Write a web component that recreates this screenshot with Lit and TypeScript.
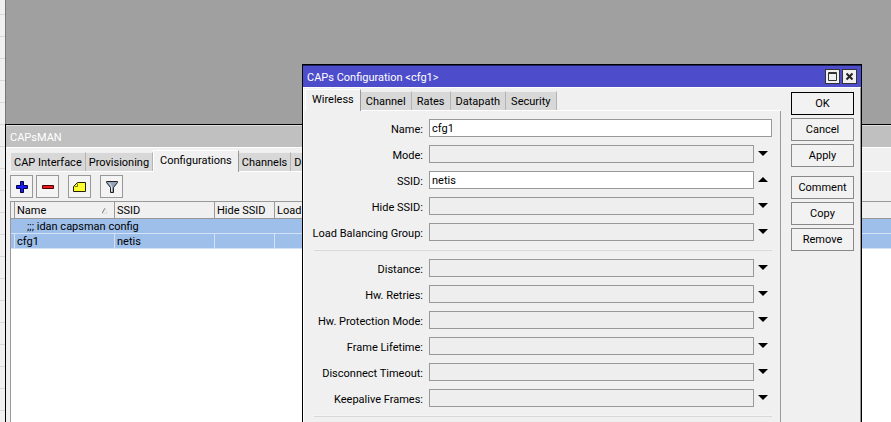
import { LitElement, html, css, svg, nothing } from "lit";
import { customElement, property } from "lit/decorators.js";
import { classMap } from "lit/directives/class-map.js";

const shared = css`
  * { box-sizing: border-box; }
  button, input {
    font: inherit;
    color: inherit;
    margin: 0;
    border-radius: 0;
  }
  button { cursor: pointer; }
`;

interface Field {
  label: string;
  value?: string;
  kind: "text" | "unset" | "set";
}

@customElement("tab-strip")
export class TabStrip extends LitElement {
  @property({ attribute: false }) tabs: string[] = [];
  @property() active = "";

  static styles = [
    shared,
    css`
      :host { display: block; }
      .tabs {
        display: flex;
        align-items: flex-end;
        height: 23px;
        border-bottom: 1px solid #fff;
      }
      .tab {
        flex: none;
        height: 19px;
        padding: 1px var(--tab-pad, 4px) 0;
        border: 0;
        border-top: 1px solid #eee;
        border-right: 1px solid #b4b4b4;
        background: #d8d8d8;
        line-height: 18px;
        white-space: nowrap;
      }
      .tab.active {
        height: 22px;
        margin-bottom: -1px;
        padding: 0 6px 2px;
        border-top-color: #fff;
        border-left: 1px solid #fff;
        border-right-color: #999;
        background: #f0f0f0;
      }
    `,
  ];

  render() {
    return html`<div class="tabs" role="tablist">
      ${this.tabs.map(
        (t) => html`<button
          role="tab"
          aria-selected=${t === this.active}
          class=${classMap({ tab: true, active: t === this.active })}
        >${t}</button>`
      )}
    </div>`;
  }
}

@customElement("caps-window")
export class CapsWindow extends LitElement {
  static styles = [
    shared,
    css`
      :host {
        display: flex;
        flex-direction: column;
        border-top: 1px solid #000;
        border-left: 1px solid #000;
        background: #f0f0f0;
      }
      tab-strip {
        --tab-pad: 3px;
        padding-left: 1px;
      }
      .title {
        height: 22px;
        padding: 0 4px;
        border-top: 1px solid #ddd;
        background: #c0c0c0;
        color: #fff;
        line-height: 24px;
      }
      .body {
        flex: 1;
        display: flex;
        flex-direction: column;
        padding: 1px 0 0 4px;
        border-top: 1px solid #fff;
      }
      .tools {
        display: flex;
        gap: 3px;
        padding: 3px 0;
      }
      .tool {
        display: grid;
        place-items: center;
        width: 23px;
        height: 23px;
        padding: 0;
        border: 1px solid #999;
        background: #f4f4f4;
      }
      .tool.apart { margin-left: 6px; }
      .list {
        flex: 1;
        border-top: 1px solid #999;
        border-left: 1px solid #999;
        background: #fff;
      }
      table {
        width: 100%;
        table-layout: fixed;
        border-collapse: separate;
        border-spacing: 0;
      }
      th, td {
        padding: 1px 2px 0;
        font-weight: normal;
        text-align: left;
        white-space: nowrap;
        overflow: hidden;
      }
      th {
        height: 17px;
        border-right: 1px solid #999;
        border-bottom: 1px solid #999;
        background: #f0f0f0;
        line-height: 15px;
      }
      td {
        height: 15px;
        border-right: 1px solid #d3e2f6;
        border-bottom: 1px solid #d3e2f6;
        background: #9dbfea;
        line-height: 13px;
      }
      .note { padding-left: 12px; }
      .note, .first, .last { border-right: 0; }
      .grip { width: 4px; padding: 0; }
      .wide { width: 100px; }
      .mid { width: 60px; }
      .sorted { display: flex; justify-content: space-between; align-items: center; }
      .sorted svg { margin-right: 4px; }
    `,
  ];

  private icon(name: string) {
    const shapes: Record<string, unknown> = {
      add: svg`<path d="M5.500 1.500h3v4h4v3h-4v4h-3v-4h-4v-3h4z" fill="#1a1aff" stroke="#00003c"/>`,
      remove: svg`<path d="M1.500 5.500h11v3h-11z" fill="#f01818" stroke="#4a0000"/>`,
      comment: svg`<path d="M4.500 2.500h8v9h-12v-5z" fill="#ffff30" stroke="#222200"/><path d="M1.500 6.500h3v-3" fill="none" stroke="#777700"/>`,
      filter: svg`<path d="M1.500 1.500h11v1l-4 5v5h-3v-5l-4-5z" fill="#93a3b8" stroke="#222"/><path d="M4.500 3l2 3.500v5" fill="none" stroke="#dfe6ef"/>`,
    };
    return html`<svg width="14" height="14" viewBox="0 0 14 14" aria-hidden="true">${shapes[name]}</svg>`;
  }

  render() {
    return html`
      <div class="title">CAPsMAN</div>
      <div class="body">
        <tab-strip
          .tabs=${["CAP Interface", "Provisioning", "Configurations", "Channels", "Datapaths"]}
          active="Configurations"
        ></tab-strip>
        <div class="tools">
          <button class="tool" aria-label="Add">${this.icon("add")}</button>
          <button class="tool" aria-label="Remove">${this.icon("remove")}</button>
          <button class="tool apart" aria-label="Comment">${this.icon("comment")}</button>
          <button class="tool apart" aria-label="Filter">${this.icon("filter")}</button>
        </div>
        <div class="list">
          <table>
            <thead>
              <tr>
                <th class="grip"></th>
                <th class="wide"><div class="sorted">Name
                  <svg width="6" height="7" viewBox="0 0 6 7" aria-hidden="true"><path d="M0 6.500L3 1" stroke="#777" fill="none"/><path d="M3 1L5 6.500H0" stroke="#ddd" fill="none"/></svg></div></th>
                <th class="wide">SSID</th>
                <th class="mid">Hide SSID</th>
                <th class="wide">Load</th>
                <th class="last"></th>
              </tr>
            </thead>
            <tbody>
              <tr>
                <td class="first"></td>
                <td class="note" colspan="5">;;; idan capsman config</td>
              </tr>
              <tr>
                <td></td>
                <td>cfg1</td>
                <td>netis</td>
                <td></td>
                <td></td>
                <td class="last"></td>
              </tr>
            </tbody>
          </table>
        </div>
      </div>
    `;
  }
}

@customElement("config-dialog")
export class ConfigDialog extends LitElement {
  private groups: Field[][] = [
    [
      { label: "Name", value: "cfg1", kind: "text" },
      { label: "Mode", kind: "unset" },
      { label: "SSID", value: "netis", kind: "set" },
      { label: "Hide SSID", kind: "unset" },
      { label: "Load Balancing Group", kind: "unset" },
    ],
    [
      { label: "Distance", kind: "unset" },
      { label: "Hw. Retries", kind: "unset" },
      { label: "Hw. Protection Mode", kind: "unset" },
      { label: "Frame Lifetime", kind: "unset" },
      { label: "Disconnect Timeout", kind: "unset" },
      { label: "Keepalive Frames", kind: "unset" },
    ],
  ];

  static styles = [
    shared,
    css`
      :host {
        display: flex;
        flex-direction: column;
        border: 1px solid #000;
        border-bottom: 0;
        background: #f0f0f0;
      }
      tab-strip { --tab-pad: 5px; }
      .title {
        display: flex;
        align-items: center;
        gap: 2px;
        height: 22px;
        padding: 0 4px;
        border-top: 1px solid #22225c;
        background: #4d4dcc;
        color: #fff;
      }
      .title span { flex: 1; padding-top: 2px; }
      .box {
        display: grid;
        place-items: center;
        width: 15px;
        height: 15px;
        padding: 0;
        border: 1px solid #333;
        background: #f0f0f0;
      }
      .main {
        flex: 1;
        display: flex;
        border-top: 1px solid #fff;
        border-right: 1px solid #999;
        border-left: 1px solid #fff;
      }
      .pane {
        flex: 1;
        display: flex;
        flex-direction: column;
        padding-left: 1px;
      }
      .form {
        flex: 1;
        display: flex;
        flex-direction: column;
        gap: 8px;
        padding: 8px 8px 0 9px;
        border-right: 1px solid #999;
      }
      .row {
        display: grid;
        grid-template-columns: 110px 1fr 18px;
        align-items: center;
        height: 18px;
      }
      label {
        justify-self: end;
        padding: 2px 1px 0 0;
        white-space: nowrap;
      }
      input {
        margin-left: 5px;
        min-width: 0;
        height: 18px;
        padding: 1px 2px 0;
        border: 1px solid #999;
        background: #fff;
        outline: 0;
      }
      input.unset { background: #eee; }
      input.full { grid-column: 2 / 4; }
      .arrow {
        display: grid;
        place-items: center;
        height: 18px;
        padding: 0;
        border: 0;
        background: none;
      }
      hr {
        width: 100%;
        height: 2px;
        margin: 0;
        border: 0;
        border-top: 1px solid #f4f4f4;
        background: #d8d8d8;
      }
      .actions {
        display: flex;
        flex-direction: column;
        gap: 3px;
        width: 79px;
        padding: 4px 6px 0 10px;
      }
      .action {
        height: 23px;
        padding: 0;
        border: 1px solid #888;
        background: #f2f2f2;
      }
      .action.default { border-color: #000; }
      .action.apart { margin-top: 6px; }
    `,
  ];

  private row(f: Field, id: string) {
    return html`<div class="row">
      <label for=${id}>${f.label}:</label>
      <input
        id=${id}
        class=${classMap({ unset: f.kind === "unset", full: f.kind === "text" })}
        .value=${f.value ?? ""}
      />
      ${f.kind === "text"
        ? nothing
        : html`<button class="arrow" aria-label="Toggle ${f.label}">
            <svg width="10" height="6" viewBox="0 0 10 6" aria-hidden="true">
              <path d=${f.kind === "set" ? "M5 0L10 5H0z" : "M0 0H10L5 5z"} />
            </svg>
          </button>`}
    </div>`;
  }

  render() {
    const rows = (g: number) => this.groups[g].map((f, i) => this.row(f, `f${g}-${i}`));
    return html`
      <div class="title">
        <span>CAPs Configuration &lt;cfg1&gt;</span>
        <button class="box" aria-label="Maximize">
          <svg width="9" height="9" viewBox="0 0 9 9" aria-hidden="true"><path d="M.5.5h8v8h-8zM0 1.500h9" fill="none" stroke="#333" /></svg>
        </button>
        <button class="box" aria-label="Close">
          <svg width="9" height="9" viewBox="0 0 9 9" aria-hidden="true"><path d="M1.500 1.500l6 6M7.500 1.500l-6 6" fill="none" stroke="#222" stroke-width="2" /></svg>
        </button>
      </div>
      <div class="main">
        <div class="pane">
          <tab-strip
            .tabs=${["Wireless", "Channel", "Rates", "Datapath", "Security"]}
            active="Wireless"
          ></tab-strip>
          <div class="form">${rows(0)}<hr />${rows(1)}<hr /></div>
        </div>
        <div class="actions">
          <button class="action default">OK</button>
          <button class="action">Cancel</button>
          <button class="action">Apply</button>
          <button class="action apart">Comment</button>
          <button class="action">Copy</button>
          <button class="action">Remove</button>
        </div>
      </div>
    `;
  }
}

@customElement("app-root")
export class AppRoot extends LitElement {
  static styles = [
    shared,
    css`
      :host {
        display: block;
        color: #000;
        font: 11px/15px Roboto, "Liberation Sans", sans-serif;
      }
      .desktop {
        position: relative;
        display: flex;
        min-height: 100vh;
        overflow: hidden;
        background: #a0a0a0;
      }
      .gutter {
        flex: none;
        width: 5px;
        background: repeating-linear-gradient(#f0f0f0 0 14px, #d8d8d8 14px 15px, #f0f0f0 15px 22px);
      }
      .workspace {
        flex: 1;
        min-width: 0;
        display: flex;
        flex-direction: column;
        padding-top: 124px;
        box-shadow: inset 1px 0 #777;
      }
      caps-window { flex: 1; }
      config-dialog {
        position: absolute;
        top: 64px;
        right: 29px;
        bottom: 0;
        left: 302px;
      }
    `,
  ];

  render() {
    return html`<div class="desktop">
      <div class="gutter"></div>
      <div class="workspace"><caps-window></caps-window></div>
      <config-dialog></config-dialog>
    </div>`;
  }
}
